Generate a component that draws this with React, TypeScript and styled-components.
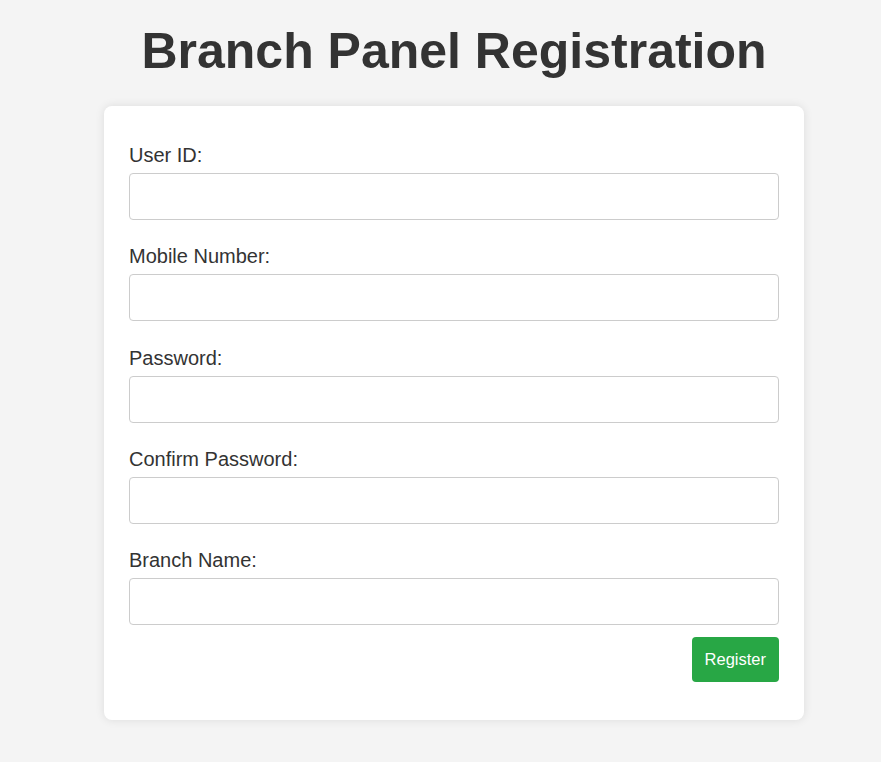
import React from "react";
import styled, { createGlobalStyle } from "styled-components";

const GlobalStyle = createGlobalStyle`
  html, body {
    margin: 0;
    padding: 0;
    background: #f4f4f4;
    font-family: "Liberation Sans", Arial, sans-serif;
  }
`;

const Page = styled.div`
  display: flex;
  flex-direction: column;
  align-items: center;
  padding: 22px 0 40px 27px;
`;

const Title = styled.h1`
  margin: 0 0 26px;
  font-size: 50px;
  font-weight: bold;
  color: #333;
  text-align: center;
`;

const Card = styled.form`
  width: 700px;
  box-sizing: border-box;
  background: #fff;
  border-radius: 8px;
  box-shadow: 0 0 10px rgba(0, 0, 0, 0.1);
  padding: 38px 25px;
  display: flex;
  flex-direction: column;
`;

const Fields = styled.div`
  display: flex;
  flex-direction: column;
  gap: 25.25px;
`;

const Group = styled.div`
  display: flex;
  flex-direction: column;
`;

const Label = styled.label`
  font-size: 20px;
  line-height: 23px;
  color: #333;
  margin-bottom: 6px;
`;

const Input = styled.input`
  height: 47px;
  box-sizing: border-box;
  border: 1px solid #ccc;
  border-radius: 4px;
  padding: 0 12px;
  font-size: 16px;
  font-family: inherit;
  background: #fff;
`;

const Actions = styled.div`
  display: flex;
  justify-content: flex-end;
  margin-top: 12px;
`;

const Button = styled.button`
  height: 45px;
  padding: 0 13px;
  border: none;
  border-radius: 4px;
  background: #28a745;
  color: #fff;
  font-family: inherit;
  font-size: 16.5px;
  cursor: pointer;
`;

const fields = [
  { id: "userId", label: "User ID:", type: "text" },
  { id: "mobile", label: "Mobile Number:", type: "text" },
  { id: "password", label: "Password:", type: "password" },
  { id: "confirm", label: "Confirm Password:", type: "password" },
  { id: "branch", label: "Branch Name:", type: "text" },
];

export default function App() {
  return (
    <>
      <GlobalStyle />
      <Page>
        <Title>Branch Panel Registration</Title>
        <Card onSubmit={(e) => e.preventDefault()}>
          <Fields>
            {fields.map((f) => (
              <Group key={f.id}>
                <Label htmlFor={f.id}>{f.label}</Label>
                <Input id={f.id} type={f.type} />
              </Group>
            ))}
          </Fields>
          <Actions>
            <Button type="submit">Register</Button>
          </Actions>
        </Card>
      </Page>
    </>
  );
}
